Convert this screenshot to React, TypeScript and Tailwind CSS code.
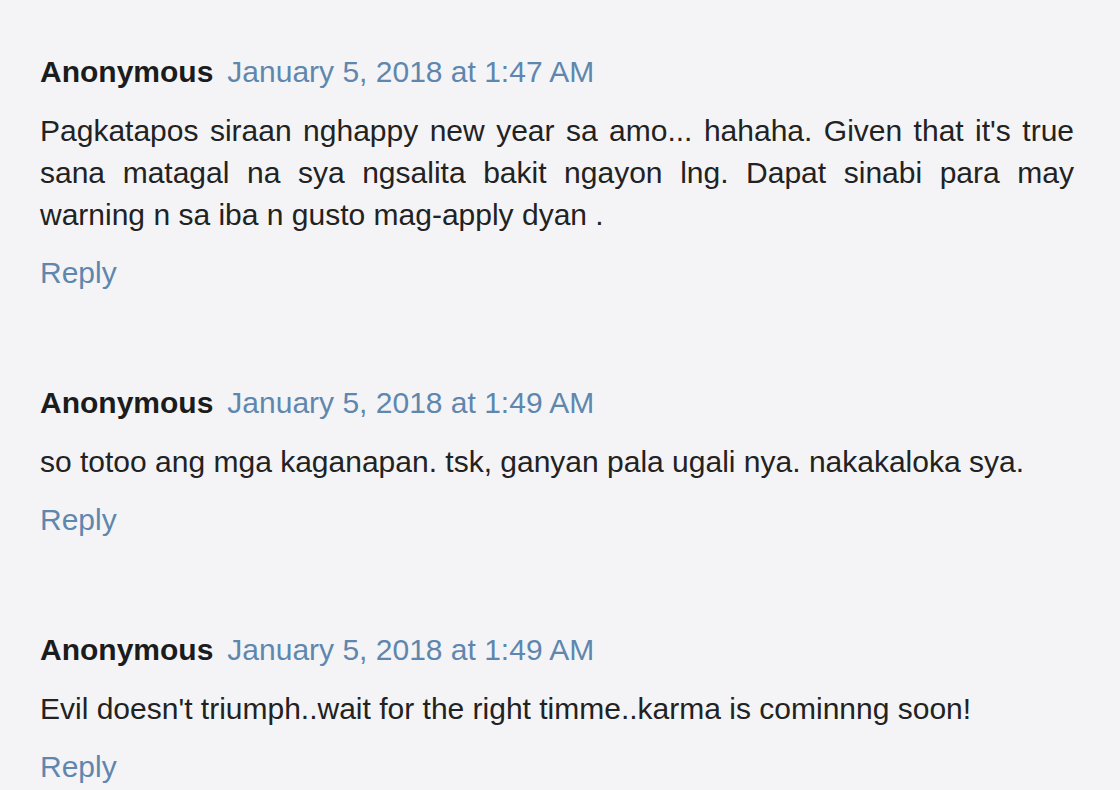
import React from "react";

const comments = [
  {
    date: "January 5, 2018 at 1:47 AM",
    body: "Pagkatapos siraan nghappy new year sa amo... hahaha. Given that it's true sana matagal na sya ngsalita bakit ngayon lng. Dapat sinabi para may warning n sa iba n gusto mag-apply dyan .",
  },
  {
    date: "January 5, 2018 at 1:49 AM",
    body: "so totoo ang mga kaganapan. tsk, ganyan pala ugali nya. nakakaloka sya.",
  },
  {
    date: "January 5, 2018 at 1:49 AM",
    body: "Evil doesn't triumph..wait for the right timme..karma is cominnng soon!",
  },
];

export default function App() {
  return (
    <div
      className="w-[1120px] h-[790px] overflow-hidden bg-[#f4f4f6] pt-[51px] pl-[40px] pr-[46px]"
      style={{ fontFamily: '"Liberation Sans", Arial, sans-serif' }}
    >
      <div className="flex flex-col gap-[88px]">
        {comments.map((c, i) => (
          <div key={i} className="flex flex-col text-[30px] leading-[42px]">
            <div className="flex items-baseline">
              <span className="font-bold text-[#1c1c1c]">Anonymous</span>
              <span className="ml-[14px] text-[#5f87ae]">{c.date}</span>
            </div>
            <p className="mt-[17px] text-[#222222] text-justify">{c.body}</p>
            <div className="mt-[16px] text-[#5f87ae]">Reply</div>
          </div>
        ))}
      </div>
    </div>
  );
}
